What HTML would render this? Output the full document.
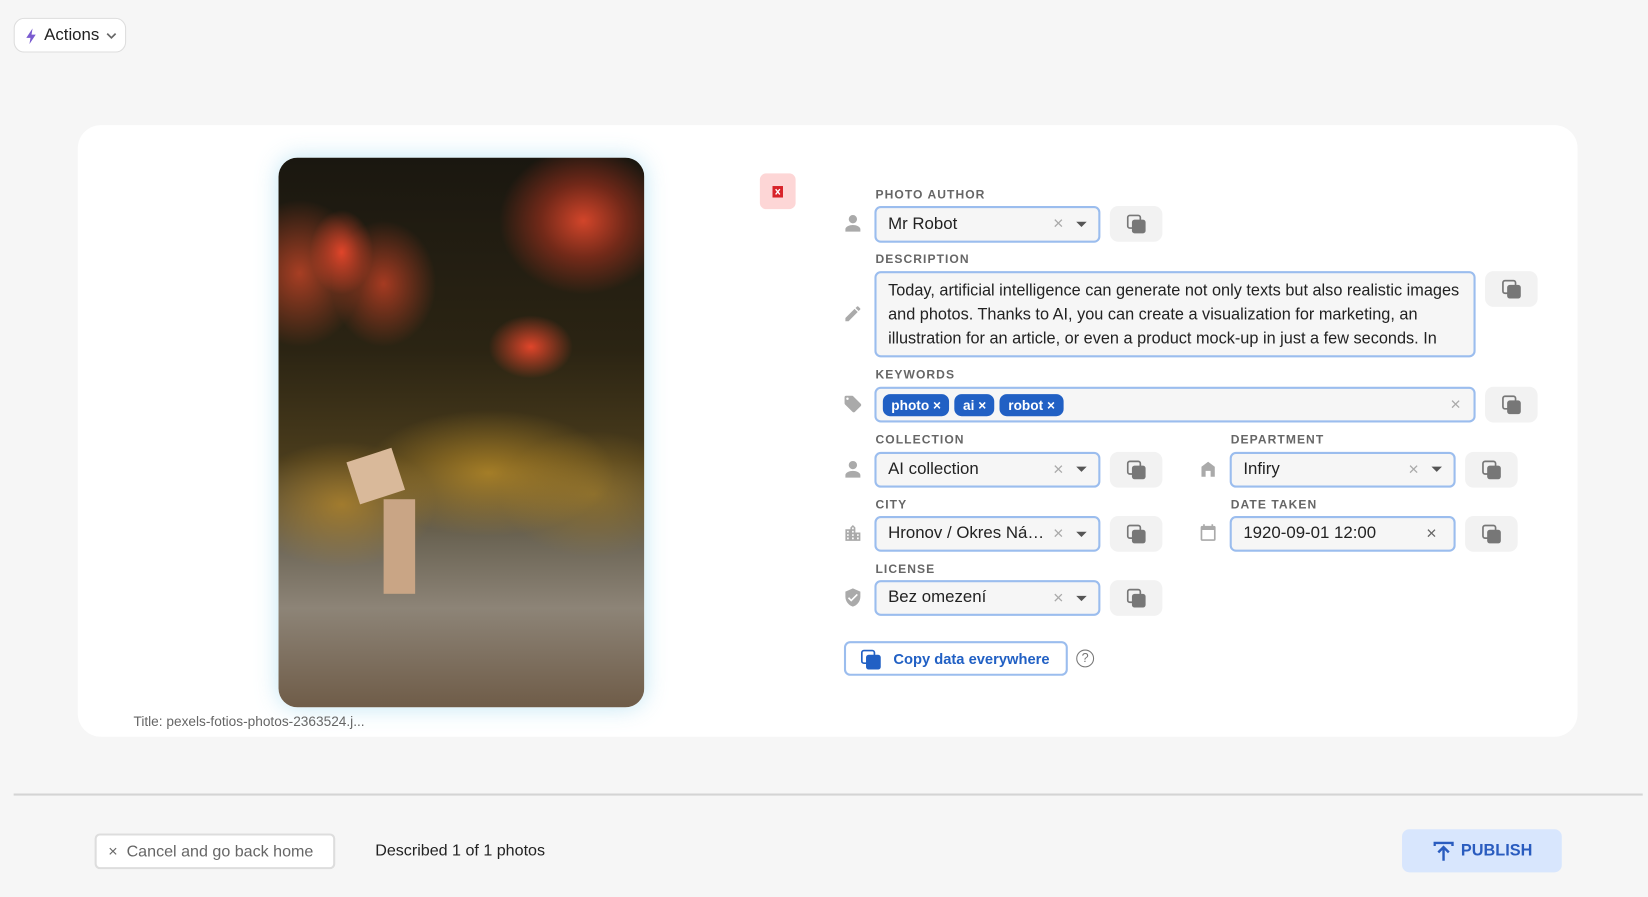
<!DOCTYPE html>
<html><head><meta charset="utf-8"><style>
*{box-sizing:border-box;margin:0;padding:0}
html,body{width:1648px;height:896px;overflow:hidden;background:#f6f6f6;font-family:"Liberation Sans",Roboto,sans-serif}
#w{position:absolute;left:0;top:0;width:1568px;height:853px;transform:scale(1.051);transform-origin:0 0}
.a{position:absolute}
.lbl{position:absolute;font-size:11.5px;font-weight:bold;letter-spacing:1px;color:#666;line-height:12px}
.inp{position:absolute;background:#f6f6f6;border:2px solid #9bbdee;border-radius:6px;font-size:16px;color:#222;padding-left:11px;display:flex;align-items:center}
.inp span.t{display:block;width:150px;white-space:nowrap;overflow:hidden;text-overflow:ellipsis}
.cp{position:absolute;width:50px;height:34px;background:#f2f2f2;border-radius:8px}
.cp svg{position:absolute;left:16px;top:8px}
.x{position:absolute;color:#aaa;font-size:17px}
.dd{position:absolute;width:0;height:0;border-left:5px solid transparent;border-right:5px solid transparent;border-top:5px solid #555}
.ic{position:absolute}
.chip{display:inline-block;background:#2160c4;color:#fff;font-weight:bold;font-size:13px;border-radius:7px;padding:3px 8px;margin-right:5px;line-height:15px}
</style></head><body><div id="w">
<div class="a" style="left:13px;top:17px;width:107px;height:33px;background:#fff;border:1px solid #ddd;border-radius:10px;font-size:16px;color:#222">
<svg class="a" style="left:10px;top:9px" width="12" height="15" viewBox="0 0 12 15"><path d="M7 0L1 9h4l-1 6 6-9H6z" fill="#7a5bd0"/></svg>
<span class="a" style="left:28px;top:7px">Actions</span>
<svg class="a" style="left:87px;top:13px" width="10" height="7"><path d="M1 1l4 4 4-4" stroke="#666" stroke-width="1.6" fill="none"/></svg>
</div>
<div class="a" style="left:74px;top:119px;width:1427px;height:582px;background:#fff;border-radius:22px"></div>
<div class="a" style="left:265px;top:150px;width:348px;height:523px;border-radius:18px;overflow:hidden;box-shadow:0 0 22px rgba(120,200,230,.45);background:
radial-gradient(ellipse 40px 30px at 240px 180px,#e0452a,transparent),
radial-gradient(ellipse 30px 40px at 60px 90px,#e0452a,transparent),
radial-gradient(ellipse 50px 60px at 100px 120px,rgba(220,70,40,.7),transparent),
radial-gradient(ellipse 80px 70px at 290px 60px,#d2452a 0,rgba(170,50,30,.6) 50%,transparent 100%),
radial-gradient(ellipse 60px 70px at 20px 110px,rgba(200,70,40,.8),transparent),
radial-gradient(ellipse 120px 60px at 200px 300px,rgba(200,150,40,.7),transparent),
radial-gradient(ellipse 90px 60px at 60px 330px,rgba(190,140,40,.7),transparent),
radial-gradient(ellipse 90px 60px at 300px 320px,rgba(170,130,40,.6),transparent),
linear-gradient(180deg,#1a1710 0%,#2b2413 35%,#4a3c1c 55%,#6d6656 70%,#8d8477 82%,#6f5c48 100%)"></div>
<div class="a" style="left:335px;top:432px;width:45px;height:42px;background:#d9b99a;transform:rotate(-18deg)"></div>
<div class="a" style="left:365px;top:475px;width:30px;height:90px;background:#c9a585"></div>
<div class="a" style="left:127px;top:679px;font-size:13px;color:#666">Title: pexels-fotios-photos-2363524.j...</div>
<div class="a" style="left:723px;top:165px;width:34px;height:34px;background:#fdd6d6;border-radius:6px"><svg class="a" style="left:12px;top:11px" width="10" height="12"><rect x="0" y="1" width="10" height="11" fill="#d8232a"/><path d="M3 4l4 5M7 4l-4 5" stroke="#fff" stroke-width="1.3"/></svg></div>

<svg class="ic" style="left:802px;top:203px" width="19" height="19" viewBox="0 0 24 24"><path d="M12 12a5 5 0 1 0 0-10 5 5 0 0 0 0 10zm0 2c-4 0-9 2-9 5v3h18v-3c0-3-5-5-9-5z" fill="#aaa"/></svg>
<svg class="ic" style="left:802px;top:289px" width="19" height="19" viewBox="0 0 24 24"><path d="M3 17.2V21h3.8L17.8 9.9 14 6.2zM20.7 7a1 1 0 0 0 0-1.4l-2.3-2.3a1 1 0 0 0-1.4 0l-1.8 1.8 3.7 3.7z" fill="#aaa"/></svg>
<svg class="ic" style="left:802px;top:375px" width="19" height="19" viewBox="0 0 24 24"><path d="M21.4 11.6l-9-9C12.1 2.2 11.6 2 11 2H4a2 2 0 0 0-2 2v7c0 .6.2 1.1.6 1.4l9 9c.4.4.9.6 1.4.6s1-.2 1.4-.6l7-7c.4-.4.6-.9.6-1.4s-.2-1-.6-1.4zM5.5 7A1.5 1.5 0 1 1 5.5 4a1.5 1.5 0 0 1 0 3z" fill="#aaa"/></svg>
<svg class="ic" style="left:802px;top:437px" width="19" height="19" viewBox="0 0 24 24"><path d="M12 12a5 5 0 1 0 0-10 5 5 0 0 0 0 10zm0 2c-4 0-9 2-9 5v3h18v-3c0-3-5-5-9-5z" fill="#aaa"/></svg>
<svg class="ic" style="left:802px;top:498px" width="19" height="19" viewBox="0 0 24 24"><path d="M15 11V5l-3-3-3 3v2H3v14h18V11zm-8 8H5v-2h2zm0-4H5v-2h2zm0-4H5V9h2zm6 8h-2v-2h2zm0-4h-2v-2h2zm0-4h-2V9h2zm0-4h-2V5h2zm6 12h-2v-2h2zm0-4h-2v-2h2z" fill="#aaa"/></svg>
<svg class="ic" style="left:802px;top:559px" width="19" height="19" viewBox="0 0 24 24"><path d="M12 1L3 5v6c0 5.5 3.8 10.7 9 12 5.2-1.3 9-6.5 9-12V5zm-2 16l-4-4 1.4-1.4L10 14.2l6.6-6.6L18 9z" fill="#aaa"/></svg>
<svg class="ic" style="left:1140px;top:437px" width="19" height="19" viewBox="0 0 24 24"><path d="M12 3L4 9v12h5v-7h6v7h5V9z" fill="#aaa"/></svg>
<svg class="ic" style="left:1140px;top:498px" width="19" height="19" viewBox="0 0 24 24"><path d="M19 3h-1V1h-2v2H8V1H6v2H5a2 2 0 0 0-2 2v14a2 2 0 0 0 2 2h14a2 2 0 0 0 2-2V5a2 2 0 0 0-2-2zm0 16H5V8h14z" fill="#aaa"/></svg>

<div class="lbl" style="left:833px;top:180px">PHOTO AUTHOR</div>
<div class="inp" style="left:832px;top:196px;width:215px;height:35px">Mr Robot</div>
<div class="x" style="left:1002px;top:203px">×</div><div class="dd" style="left:1024px;top:211px"></div>

<div class="lbl" style="left:833px;top:241px">DESCRIPTION</div>
<div class="inp" style="left:832px;top:258px;width:572px;height:82px;padding-top:5px;font-size:15.5px;line-height:23px;overflow:hidden;padding-right:12px;display:block">Today, artificial intelligence can generate not only texts but also realistic images and photos. Thanks to AI, you can create a visualization for marketing, an illustration for an article, or even a product mock-up in just a few seconds. In 2025 there are a number of tools for creating such images quickly.</div>

<div class="lbl" style="left:833px;top:351px">KEYWORDS</div>
<div class="inp" style="left:832px;top:368px;width:572px;height:34px;padding-left:6px"><span class="chip">photo ×</span><span class="chip">ai ×</span><span class="chip">robot ×</span></div>
<div class="x" style="left:1380px;top:375px">×</div>

<div class="lbl" style="left:833px;top:413px">COLLECTION</div>
<div class="inp" style="left:832px;top:430px;width:215px;height:34px">AI collection</div>
<div class="x" style="left:1002px;top:437px">×</div><div class="dd" style="left:1024px;top:444px"></div>
<div class="lbl" style="left:1171px;top:413px">DEPARTMENT</div>
<div class="inp" style="left:1170px;top:430px;width:215px;height:34px">Infiry</div>
<div class="x" style="left:1340px;top:437px">×</div><div class="dd" style="left:1362px;top:444px"></div>

<div class="lbl" style="left:833px;top:475px">CITY</div>
<div class="inp" style="left:832px;top:491px;width:215px;height:34px"><span class="t">Hronov / Okres Náchod</span></div>
<div class="x" style="left:1002px;top:498px">×</div><div class="dd" style="left:1024px;top:506px"></div>
<div class="lbl" style="left:1171px;top:475px">DATE TAKEN</div>
<div class="inp" style="left:1170px;top:491px;width:215px;height:34px">1920-09-01 12:00</div>
<div class="x" style="left:1357px;top:498px;color:#666">×</div>

<div class="lbl" style="left:833px;top:536px">LICENSE</div>
<div class="inp" style="left:832px;top:552px;width:215px;height:34px">Bez omezení</div>
<div class="x" style="left:1002px;top:559px">×</div><div class="dd" style="left:1024px;top:567px"></div>

<div class="cp" style="left:1056px;top:196px"><svg width="20" height="19"><rect x="1" y="1" width="12" height="12" rx="2" fill="none" stroke="#777" stroke-width="1.6"/><rect x="5" y="5" width="13" height="13" rx="2.5" fill="#777"/></svg></div>
<div class="cp" style="left:1413px;top:258px"><svg width="20" height="19"><rect x="1" y="1" width="12" height="12" rx="2" fill="none" stroke="#777" stroke-width="1.6"/><rect x="5" y="5" width="13" height="13" rx="2.5" fill="#777"/></svg></div>
<div class="cp" style="left:1413px;top:368px"><svg width="20" height="19"><rect x="1" y="1" width="12" height="12" rx="2" fill="none" stroke="#777" stroke-width="1.6"/><rect x="5" y="5" width="13" height="13" rx="2.5" fill="#777"/></svg></div>
<div class="cp" style="left:1056px;top:430px"><svg width="20" height="19"><rect x="1" y="1" width="12" height="12" rx="2" fill="none" stroke="#777" stroke-width="1.6"/><rect x="5" y="5" width="13" height="13" rx="2.5" fill="#777"/></svg></div>
<div class="cp" style="left:1394px;top:430px"><svg width="20" height="19"><rect x="1" y="1" width="12" height="12" rx="2" fill="none" stroke="#777" stroke-width="1.6"/><rect x="5" y="5" width="13" height="13" rx="2.5" fill="#777"/></svg></div>
<div class="cp" style="left:1056px;top:491px"><svg width="20" height="19"><rect x="1" y="1" width="12" height="12" rx="2" fill="none" stroke="#777" stroke-width="1.6"/><rect x="5" y="5" width="13" height="13" rx="2.5" fill="#777"/></svg></div>
<div class="cp" style="left:1394px;top:491px"><svg width="20" height="19"><rect x="1" y="1" width="12" height="12" rx="2" fill="none" stroke="#777" stroke-width="1.6"/><rect x="5" y="5" width="13" height="13" rx="2.5" fill="#777"/></svg></div>
<div class="cp" style="left:1056px;top:552px"><svg width="20" height="19"><rect x="1" y="1" width="12" height="12" rx="2" fill="none" stroke="#777" stroke-width="1.6"/><rect x="5" y="5" width="13" height="13" rx="2.5" fill="#777"/></svg></div>

<div class="a" style="left:803px;top:610px;width:213px;height:33px;border:2px solid #9bbdee;border-radius:6px;background:#fff">
<svg class="a" style="left:14px;top:6px" width="20" height="19"><rect x="1" y="1" width="12" height="12" rx="2" fill="none" stroke="#2160c4" stroke-width="1.6"/><rect x="5" y="5" width="14" height="14" rx="2.5" fill="#2160c4"/></svg>
<span class="a" style="left:45px;top:7px;font-size:14px;font-weight:bold;color:#2160c4;white-space:nowrap">Copy data everywhere</span></div>
<div class="a" style="left:1024px;top:618px;width:17px;height:17px;border:1.5px solid #777;border-radius:50%;font-size:12px;color:#777;text-align:center;line-height:14px">?</div>

<div class="a" style="left:13px;top:755px;width:1550px;height:2px;background:#d4d4d4"></div>
<div class="a" style="left:90px;top:793px;width:229px;height:34px;background:#fff;border:2px solid #ddd;border-radius:5px;font-size:15.3px;color:#666;padding:7px 0 0 11px;white-space:nowrap">×&nbsp; Cancel and go back home</div>
<div class="a" style="left:357px;top:801px;font-size:15.3px;color:#222">Described 1 of 1 photos</div>
<div class="a" style="left:1334px;top:789px;width:152px;height:41px;background:#d8e6fd;border-radius:7px">
<svg class="a" style="left:30px;top:11px" width="20" height="20"><path d="M1 5V2h17v3M9.5 19V7M4.5 11l5-5 5 5" stroke="#2a5cbf" stroke-width="2.3" fill="none"/></svg>
<span class="a" style="left:56px;top:12px;font-size:15.5px;font-weight:bold;color:#2a5cbf">PUBLISH</span></div>
</div></body></html>
